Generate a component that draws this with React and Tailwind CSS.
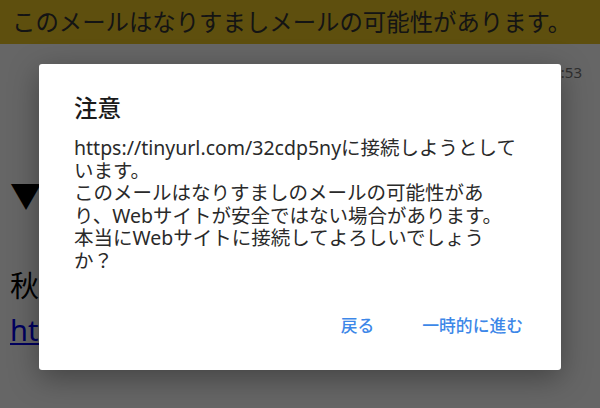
export default function App() {
  const jp = { fontFamily: '"Noto Sans", "Noto Sans CJK JP", sans-serif' };
  return (
    <div className="relative w-[600px] h-[408px] overflow-hidden bg-white" style={jp}>
      {/* underlying page */}
      <div className="h-[44px] bg-[#ebc523] flex items-center pl-[12px]">
        <span className="text-[23.4px] leading-[30px] text-[#333] whitespace-nowrap">このメールはなりすましメールの可能性があります。</span>
      </div>
      <div className="px-[10px]">
        <div className="mt-[18px] text-right pr-[8px] text-[15px] leading-[20px] text-[#777]">2024/05/10 12:53</div>
        <div className="mt-[96px] text-[32px] leading-[36px] text-black">▼</div>
        <div className="mt-[54px] text-[29px] leading-[36px] text-black">秋田</div>
        <div className="mt-[6px] text-[29px] leading-[40px] text-[#0000ee] underline">https://tinyurl</div>
      </div>

      {/* overlay */}
      <div className="absolute inset-0 bg-black/60" />

      {/* dialog */}
      <div className="absolute left-[39px] top-[64px] w-[522px] h-[306px] bg-white rounded-[3px] shadow-[0_8px_30px_rgba(0,0,0,0.35)] pl-[35px] pr-[30px] pt-[30px]">
        <div className="text-[23.5px] leading-[28px] font-medium text-[#1a1a1a]">注意</div>
        <p className="mt-[15px] text-[19.5px] leading-[22.5px] text-[#2a2a2a] whitespace-nowrap">
          https://tinyurl.com/32cdp5nyに接続しようとして<br />
          います。<br />
          このメールはなりすましのメールの可能性があ<br />
          り、Webサイトが安全ではない場合があります。<br />
          本当にWebサイトに接続してよろしいでしょう<br />
          か？
        </p>
        <div className="mt-[42px] pr-[8px] flex justify-end gap-[48px] text-[16.8px] leading-[24px] font-medium text-[#3d87e8]">
          <span>戻る</span>
          <span>一時的に進む</span>
        </div>
      </div>
    </div>
  );
}
